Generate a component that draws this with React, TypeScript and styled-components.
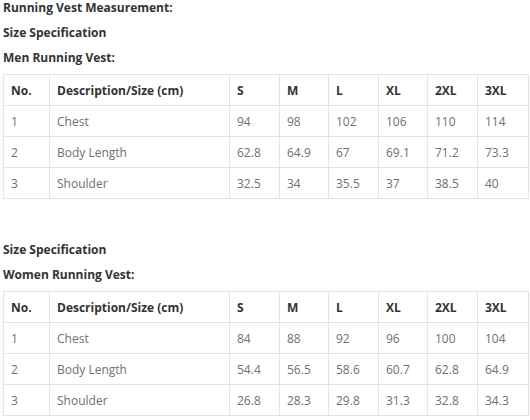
import React from "react";
import styled, { createGlobalStyle } from "styled-components";

const Global = createGlobalStyle`
  html, body { margin: 0; padding: 0; background: #fff; }
  body { font-family: "Open Sans", "Liberation Sans", sans-serif; }
`;

const Page = styled.div`
  padding: 0 0 0 3px;
  width: 526px;
`;

const Section = styled.section<{ $gapTop?: number }>`
  display: flex;
  flex-direction: column;
  margin-top: ${(p) => p.$gapTop ?? 0}px;
`;

const Heading = styled.p<{ $last?: boolean }>`
  margin: 0 0 ${(p) => (p.$last ? 8 : 9)}px;
  font-size: 12px;
  line-height: 16px;
  font-weight: 700;
  color: #333;
`;

const Table = styled.table`
  width: 526px;
  border-collapse: collapse;
  table-layout: fixed;
  font-size: 12px;
`;

const Th = styled.th`
  height: 30px;
  padding: 0 7px;
  border: 1px solid #e4e4e4;
  text-align: left;
  font-weight: 700;
  color: #333;
`;

const Td = styled.td`
  height: 30px;
  padding: 0 7px;
  border: 1px solid #e4e4e4;
  text-align: left;
  color: #707070;
`;

const widths = [46, 180, 50, 49, 50, 49, 50, 51];
const sizes = ["S", "M", "L", "XL", "2XL", "3XL"];

type Row = { label: string; values: string[] };

const SizeTable = ({ rows }: { rows: Row[] }) => (
  <Table>
    <colgroup>
      {widths.map((w, i) => (
        <col key={i} style={{ width: w }} />
      ))}
    </colgroup>
    <thead>
      <tr>
        <Th>No.</Th>
        <Th>Description/Size (cm)</Th>
        {sizes.map((s) => (
          <Th key={s}>{s}</Th>
        ))}
      </tr>
    </thead>
    <tbody>
      {rows.map((r, i) => (
        <tr key={r.label}>
          <Td>{i + 1}</Td>
          <Td>{r.label}</Td>
          {r.values.map((v, j) => (
            <Td key={j}>{v}</Td>
          ))}
        </tr>
      ))}
    </tbody>
  </Table>
);

const men: Row[] = [
  { label: "Chest", values: ["94", "98", "102", "106", "110", "114"] },
  { label: "Body Length", values: ["62.8", "64.9", "67", "69.1", "71.2", "73.3"] },
  { label: "Shoulder", values: ["32.5", "34", "35.5", "37", "38.5", "40"] },
];

const women: Row[] = [
  { label: "Chest", values: ["84", "88", "92", "96", "100", "104"] },
  { label: "Body Length", values: ["54.4", "56.5", "58.6", "60.7", "62.8", "64.9"] },
  { label: "Shoulder", values: ["26.8", "28.3", "29.8", "31.3", "32.8", "34.3"] },
];

export default function App() {
  return (
    <Page>
      <Global />
      <Section>
        <Heading>Running Vest Measurement:</Heading>
        <Heading>Size Specification</Heading>
        <Heading $last>Men Running Vest:</Heading>
        <SizeTable rows={men} />
      </Section>
      <Section $gapTop={43}>
        <Heading>Size Specification</Heading>
        <Heading $last>Women Running Vest:</Heading>
        <SizeTable rows={women} />
      </Section>
    </Page>
  );
}
